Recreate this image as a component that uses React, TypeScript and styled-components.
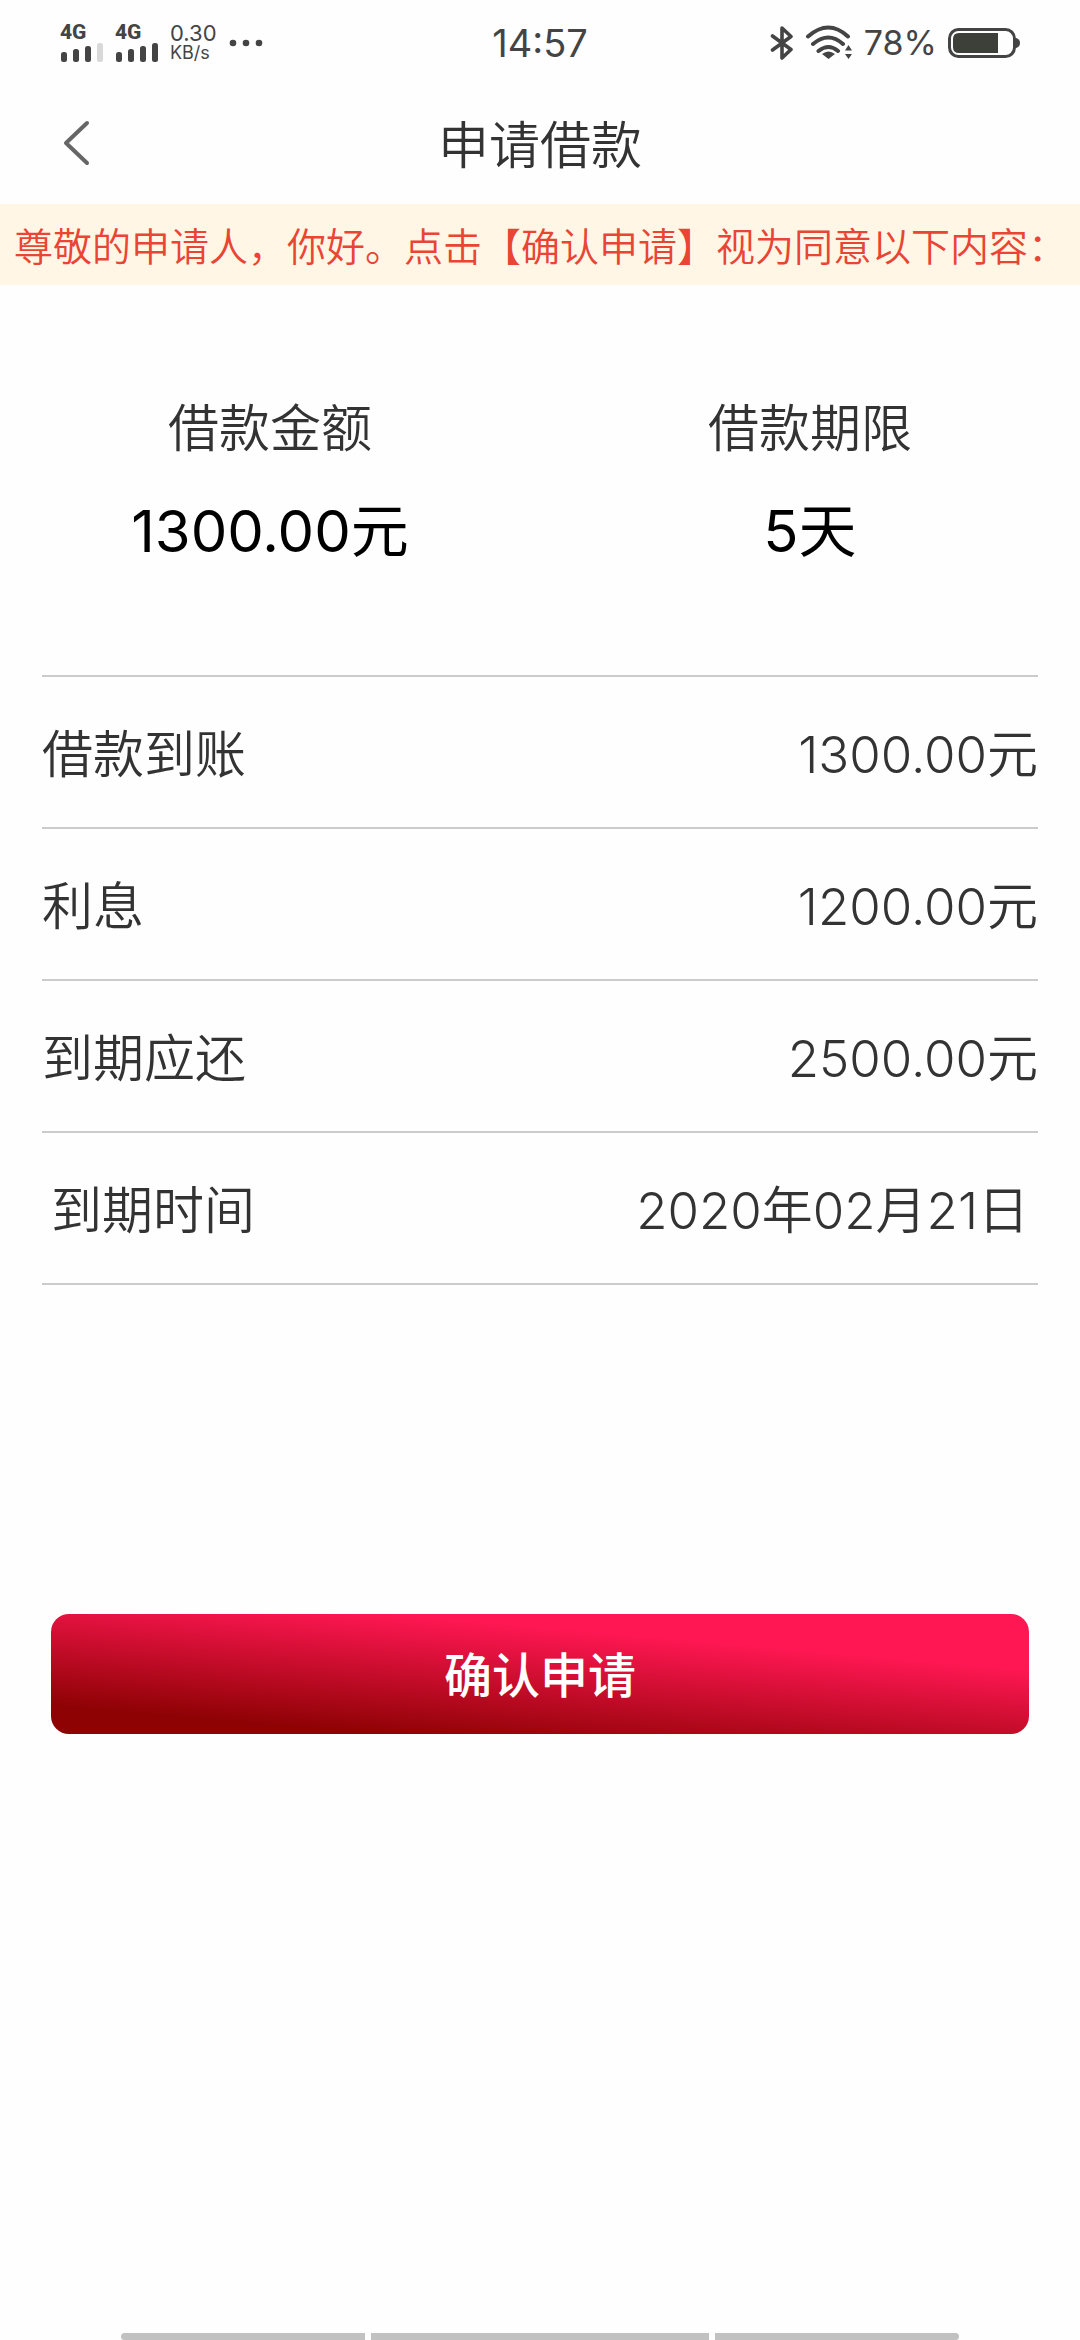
import React from "react";
import styled, { createGlobalStyle } from "styled-components";

const GlobalStyle = createGlobalStyle`
  *, *::before, *::after { box-sizing: border-box; }
  body {
    margin: 0;
    background: #fefefe;
    color: #333;
    font-family: Inter, "Noto Sans CJK SC", sans-serif;
    font-weight: 350;
  }
  h1, p, dl, dt, dd { margin: 0; font-weight: inherit; }
`;

const Screen = styled.div`
  display: flex;
  flex-direction: column;
  min-height: 100vh;
`;

const StatusBar = styled.div`
  display: grid;
  grid-template-columns: 1fr auto 1fr;
  align-items: center;
  height: 86px;
  padding: 0 60px;
  color: #444;
  font-weight: 400;
`;

const StatusGroup = styled.div<{ $end?: boolean }>`
  display: flex;
  align-items: center;
  justify-content: ${(p) => (p.$end ? "flex-end" : "flex-start")};
  gap: ${(p) => (p.$end ? 11 : 12)}px;
`;

const Signal = styled.div`
  display: flex;
  flex-direction: column;
  gap: 2px;
  width: 43px;
  font: 800 21px/16px Roboto, sans-serif;
`;

const Speed = styled.div`
  display: flex;
  flex-direction: column;
  font-size: 22px;
  line-height: 20px;
`;

const SpeedUnit = styled.span`
  font-size: 18px;
`;

const Clock = styled.time`
  font-size: 38px;
  line-height: 44px;
`;

const BatteryLevel = styled.span`
  font-size: 34px;
  line-height: 44px;
`;

const Header = styled.header`
  display: grid;
  grid-template-columns: 118px 1fr 118px;
  align-items: center;
  height: 118px;
`;

const BackButton = styled.button`
  display: flex;
  align-items: center;
  height: 118px;
  padding: 0 0 4px 62px;
  border: 0;
  background: none;
  color: #666;
`;

const Title = styled.h1`
  padding-top: 2px;
  font-size: 51px;
  line-height: 60px;
  text-align: center;
`;

const Notice = styled.p`
  padding: 12px 0 12px 14px;
  background: #fff6e5;
  color: #e94434;
  font-family: "Noto Sans CJK SC", sans-serif;
  font-size: 39px;
  line-height: 57px;
  white-space: nowrap;
  overflow: hidden;
`;

const Summary = styled.dl`
  display: grid;
  grid-template-columns: 1fr 1fr;
  padding: 114px 0 102px;
  text-align: center;
`;

const SummaryItem = styled.div`
  display: flex;
  flex-direction: column;
  gap: 30px;
`;

const SummaryLabel = styled.dt`
  font-size: 51px;
  line-height: 60px;
`;

const SummaryValue = styled.dd`
  color: #000;
  font-size: 58px;
  line-height: 84px;
  font-weight: 400;
`;

const Details = styled.dl`
  margin: 0 42px;
  border-top: 2px solid #ccc;
`;

const DetailRow = styled.div<{ $inset?: boolean }>`
  display: flex;
  align-items: center;
  justify-content: space-between;
  height: 152px;
  padding: 6px ${(p) => (p.$inset ? 9 : 0)}px 0;
  border-bottom: 2px solid #ccc;
  font-size: 51px;
  line-height: 60px;
`;

const ConfirmButton = styled.button`
  height: 120px;
  margin: 329px 51px 60px;
  padding: 4px 0 0;
  border: 0;
  border-radius: 18px;
  background: linear-gradient(5deg, #8e0204 14%, #ff1753 73%);
  color: #fff;
  font-family: inherit;
  font-size: 48px;
  line-height: 60px;
  font-weight: 500;
`;

const GestureBar = styled.div`
  display: grid;
  grid-template-columns: 244fr 338fr 244fr;
  gap: 6px;
  margin-top: auto;
  padding: 0 121px;
`;

const GestureHandle = styled.span`
  height: 7px;
  background: #c1c1c1;
  &:first-child { border-radius: 4px 0 0 4px; }
  &:last-child { border-radius: 0 4px 4px 0; }
`;

const bars = [10, 13, 16, 19];

function SignalIcon({ level }: { level: number }) {
  return (
    <Signal>
      <span>4G</span>
      <svg width="43" height="20" viewBox="0 0 43 20" aria-hidden="true">
        {bars.map((h, i) => (
          <rect key={h} x={1 + i * 12} y={20 - h} width="6" height={h} rx="2.5"
            fill={i < level ? "#444" : "#d9d9d9"} />
        ))}
      </svg>
    </Signal>
  );
}

const details = [
  { label: "借款到账", value: "1300.00元" },
  { label: "利息", value: "1200.00元" },
  { label: "到期应还", value: "2500.00元" },
  { label: "到期时间", value: "2020年02月21日", inset: true },
];

export default function App() {
  return (
    <>
      <GlobalStyle />
      <Screen>
        <StatusBar>
          <StatusGroup>
            <SignalIcon level={3} />
            <SignalIcon level={4} />
            <Speed>
              <span>0.30</span>
              <SpeedUnit>KB/s</SpeedUnit>
            </Speed>
            <svg width="34" height="8" viewBox="0 0 34 8" fill="#444" aria-hidden="true">
              <circle cx="4" cy="4" r="3.3" />
              <circle cx="17" cy="4" r="3.3" />
              <circle cx="30" cy="4" r="3.3" />
            </svg>
          </StatusGroup>
          <Clock>14:57</Clock>
          <StatusGroup $end>
            <svg width="24" height="36" viewBox="0 0 24 36" fill="none" stroke="#444"
              strokeWidth="3.6" strokeLinejoin="round" strokeLinecap="round" aria-hidden="true">
              <path d="M2.5 11 21 24.500 12 33V3l9 8.500L2.500 25" />
            </svg>
            <svg width="48" height="36" viewBox="0 0 48 36" fill="none" stroke="#444"
              strokeWidth="4" strokeLinecap="round" aria-hidden="true">
              <path d="M3 11.500Q23.500-6.500 43 11.500M8 19Q23.500 6 38 19M13.500 26Q23.500 18 33 26" />
              <path d="M17 29Q23.500 24 30 29L23.500 34Z" fill="#444" stroke="none" />
              <path d="M40 25.500 43.500 20 47 25.500ZM40 29H47L43.500 34Z" fill="#444" stroke="none" />
            </svg>
            <BatteryLevel>78%</BatteryLevel>
            <svg width="72" height="30" viewBox="0 0 72 30" aria-hidden="true">
              <rect x="1.500" y="1.500" width="65" height="27" rx="9" fill="none" stroke="#444" strokeWidth="3" />
              <path d="M50 5V25H11Q5 25 5 19V11Q5 5 11 5Z" fill="#3d3f39" />
              <path d="M68 10Q72 11 72 15T68 20Z" fill="#444" />
            </svg>
          </StatusGroup>
        </StatusBar>

        <Header>
          <BackButton type="button" aria-label="返回">
            <svg width="28" height="46" viewBox="0 0 28 46" fill="none" stroke="currentColor"
              strokeWidth="4" strokeLinecap="round" strokeLinejoin="round" aria-hidden="true">
              <path d="M25 3 4 23 25 43" />
            </svg>
          </BackButton>
          <Title>申请借款</Title>
        </Header>

        <Notice>尊敬的申请人，你好。点击【确认申请】视为同意以下内容：</Notice>

        <main>
          <Summary>
            <SummaryItem>
              <SummaryLabel>借款金额</SummaryLabel>
              <SummaryValue>1300.00元</SummaryValue>
            </SummaryItem>
            <SummaryItem>
              <SummaryLabel>借款期限</SummaryLabel>
              <SummaryValue>5天</SummaryValue>
            </SummaryItem>
          </Summary>

          <Details>
            {details.map((d) => (
              <DetailRow key={d.label} $inset={d.inset}>
                <dt>{d.label}</dt>
                <dd>{d.value}</dd>
              </DetailRow>
            ))}
          </Details>
        </main>

        <ConfirmButton type="button">确认申请</ConfirmButton>

        <GestureBar aria-hidden="true">
          <GestureHandle />
          <GestureHandle />
          <GestureHandle />
        </GestureBar>
      </Screen>
    </>
  );
}
